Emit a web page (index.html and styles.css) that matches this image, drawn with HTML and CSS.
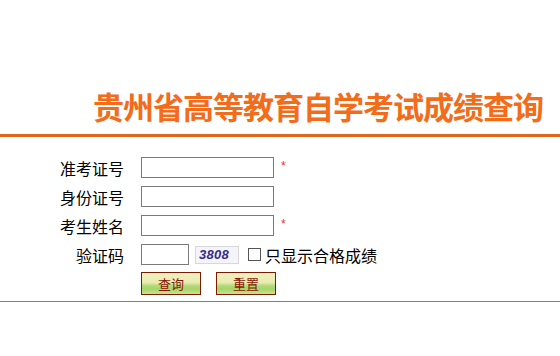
FILE: index.html
```html
<!DOCTYPE html>
<html lang="zh-CN">
<head>
<meta charset="utf-8">
<title>贵州省高等教育自学考试成绩查询</title>
<link rel="stylesheet" href="styles.css">
</head>
<body>
<div class="header">
  <h1 class="title">贵州省高等教育自学考试成绩查询</h1>
</div>
<form class="form">
  <div class="row">
    <label class="label">准考证号</label>
    <input class="field" type="text">
    <span class="req">*</span>
  </div>
  <div class="row">
    <label class="label">身份证号</label>
    <input class="field" type="text">
  </div>
  <div class="row">
    <label class="label">考生姓名</label>
    <input class="field" type="text">
    <span class="req">*</span>
  </div>
  <div class="row">
    <label class="label">验证码</label>
    <input class="field code" type="text">
    <span class="captcha">3808</span>
    <span class="check"><input class="box" type="checkbox">只显示合格成绩</span>
  </div>
  <div class="buttons">
    <button class="btn" type="button">查询</button>
    <button class="btn" type="reset">重置</button>
  </div>
</form>
</body>
</html>
```
FILE: styles.css
```css
html, body {
  margin: 0;
  padding: 0;
  background: #ffffff;
}
body {
  font-family: "Noto Sans CJK SC", "Noto Sans", sans-serif;
  color: #000;
}
.header {
  padding-top: 90px;
  border-bottom: 3px solid #e0651e;
}
.title {
  margin: 0;
  padding: 0 0 12px 93px;
  font-size: 31px;
  line-height: 32px;
  font-weight: 700;
  letter-spacing: -1px;
  color: #f26c1a;
  white-space: nowrap;
}
.form {
  margin: 0;
  padding: 16px 0 6px 0;
  border-bottom: 1px solid #cc6a26;
}
.row {
  display: flex;
  align-items: center;
  height: 29px;
}
.label {
  width: 124px;
  text-align: right;
  margin-right: 17px;
  font-size: 16px;
  line-height: 20px;
}
.field {
  box-sizing: border-box;
  width: 133px;
  height: 21px;
  margin: 0;
  padding: 0 2px;
  border: 1px solid #7a7a7a;
  background: #fff;
  font-size: 13px;
}
.field.code {
  width: 48px;
}
.req {
  color: #e83030;
  font-family: "Liberation Sans", sans-serif;
  font-size: 12px;
  margin-left: 7px;
  align-self: flex-start;
  margin-top: 6px;
}
.captcha {
  box-sizing: border-box;
  width: 44px;
  height: 18px;
  margin-left: 6px;
  border: 1px solid #d8d8d8;
  background: #f6f4fb;
  color: #352a8a;
  font-family: "Liberation Sans", sans-serif;
  font-weight: 700;
  font-style: italic;
  font-size: 13px;
  line-height: 16px;
  padding-left: 3px;
  letter-spacing: 0.3px;
}
.check {
  display: flex;
  align-items: center;
  margin-left: 9px;
  font-size: 16px;
  line-height: 20px;
}
.box {
  appearance: none;
  -webkit-appearance: none;
  box-sizing: border-box;
  width: 13px;
  height: 13px;
  margin: 0 4px 0 0;
  border: 1px solid #555;
  background: #fff;
}
.buttons {
  display: flex;
  gap: 15px;
  padding-left: 141px;
  margin-top: 3px;
}
.btn {
  box-sizing: border-box;
  width: 60px;
  height: 23px;
  margin: 0;
  padding: 0;
  border: 1px solid #7a1c00;
  background: linear-gradient(#f2f0c2 0%, #e8ecb0 45%, #b4da7c 60%, #a6d468 75%, #c8e28e 100%);
  color: #8a1400;
  font-family: "Noto Sans CJK SC", sans-serif;
  font-size: 13px;
  line-height: 21px;
}
```
